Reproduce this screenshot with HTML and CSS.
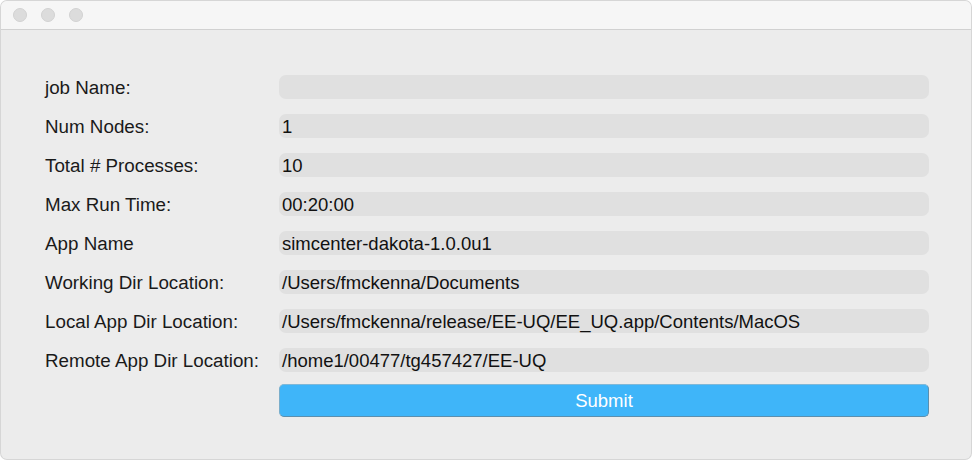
FILE: index.html
```html
<!DOCTYPE html>
<html>
<head>
<meta charset="utf-8">
<link rel="stylesheet" href="styles.css">
</head>
<body>
<div class="window">
  <div class="titlebar">
    <span class="light"></span><span class="light"></span><span class="light"></span>
  </div>
  <div class="content">
    <div class="form">
      <div class="label">job Name:</div><div class="field"></div>
      <div class="label">Num Nodes:</div><div class="field">1</div>
      <div class="label">Total # Processes:</div><div class="field">10</div>
      <div class="label">Max Run Time:</div><div class="field">00:20:00</div>
      <div class="label">App Name</div><div class="field">simcenter-dakota-1.0.0u1</div>
      <div class="label">Working Dir Location:</div><div class="field">/Users/fmckenna/Documents</div>
      <div class="label">Local App Dir Location:</div><div class="field">/Users/fmckenna/release/EE-UQ/EE_UQ.app/Contents/MacOS</div>
      <div class="label">Remote App Dir Location:</div><div class="field">/home1/00477/tg457427/EE-UQ</div>
      <div class="spacer"></div><button class="submit">Submit</button>
    </div>
  </div>
</div>
</body>
</html>
```
FILE: styles.css
```css
html, body {
  margin: 0;
  padding: 0;
  background: #ffffff;
}
body {
  width: 972px;
  height: 460px;
  overflow: hidden;
  font-family: "Liberation Sans", Arial, sans-serif;
}
.window {
  width: 970px;
  height: 458px;
  background: #ececec;
  border-radius: 6px;
  overflow: hidden;
  box-shadow: 0 0 0 1px #d6d6d6;
  margin: 1px;
  box-sizing: border-box;
}
.titlebar {
  height: 28px;
  background: #f6f6f6;
  border-bottom: 1px solid #d1d1d1;
  display: flex;
  align-items: center;
  gap: 14px;
  padding-left: 12px;
}
.light {
  width: 14px;
  height: 14px;
  border-radius: 50%;
  background: #dcdcdc;
  border: 1px solid #d2d2d2;
  box-sizing: border-box;
}
.content {
  padding: 45px 41px 0 44px;
}
.form {
  display: grid;
  grid-template-columns: 234px 650px;
  row-gap: 15px;
  align-items: center;
}
.label {
  font-size: 18.8px;
  color: #1a1a1a;
  line-height: 24px;
  position: relative;
  top: 1px;
}
.field {
  height: 24px;
  background: #e0e0e0;
  border-radius: 7px;
  font-size: 18.5px;
  line-height: 25px;
  padding-left: 3px;
  color: #111;
  white-space: nowrap;
}
.submit {
  margin-top: -3px;
  height: 33px;
  background: #3fb5f9;
  border: 1px solid #5c8fae;
  border-top-color: #7fb8d8;
  border-left-color: #7aaecb;
  border-radius: 5px;
  color: #ffffff;
  font-family: "Liberation Sans", Arial, sans-serif;
  font-size: 18.5px;
  padding: 0;
  text-align: center;
}
```
